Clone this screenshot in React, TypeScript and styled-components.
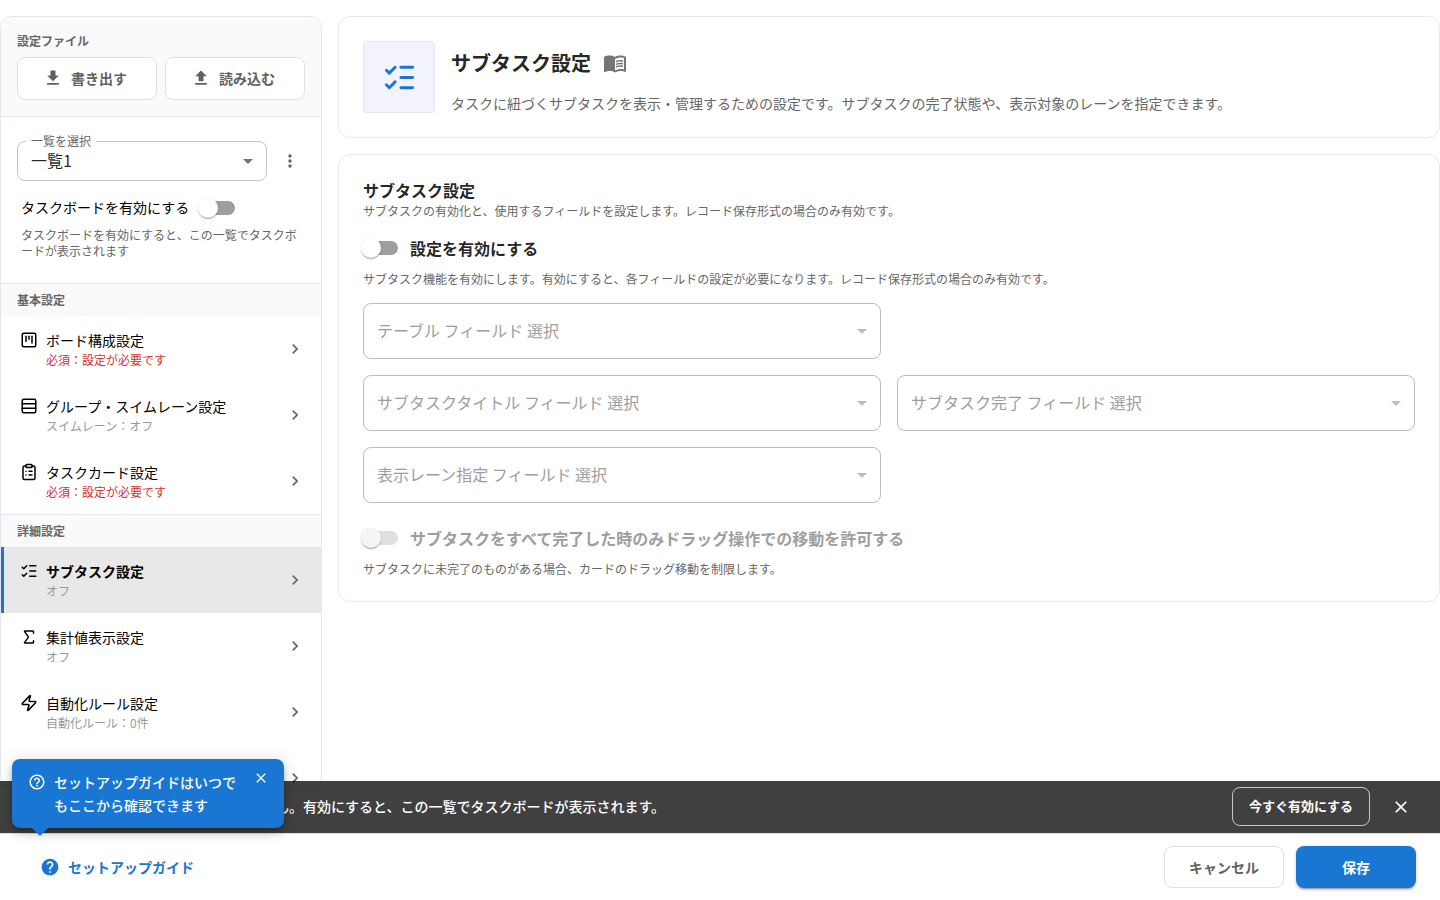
import React from "react";
import styled, { createGlobalStyle, css } from "styled-components";
import {
  MdArrowDropDown,
  MdChevronRight,
  MdClose,
  MdDownload,
  MdUpload,
  MdHelp,
  MdHelpOutline,
  MdInfoOutline,
  MdMenuBook,
  MdMoreVert,
} from "react-icons/md";
import { ClipboardList, Filter, ListChecks, Rows3, Sigma, SquareKanban, Zap } from "lucide-react";

const color = {
  primary: "#1976d2",
  text: "rgba(0, 0, 0, 0.87)",
  muted: "#666666",
  faint: "#999999",
  error: "#d32f2f",
  line: "#e3e6f0",
  surface: "#fafafa",
};

const GlobalStyle = createGlobalStyle`
  *, *::before, *::after { box-sizing: border-box; }
  body {
    margin: 0;
    background: #fff;
    color: ${color.text};
    font-family: "Noto Sans CJK JP", sans-serif;
    font-size: 14px;
    line-height: 20px;
  }
  button, select, input { font: inherit; color: inherit; margin: 0; }
  h1, h2, h3, p, ul { margin: 0; padding: 0; }
  button { cursor: pointer; }
`;

const Page = styled.div`
  height: 100vh;
  display: flex;
  flex-direction: column;
`;

const Content = styled.div`
  flex: 1;
  min-height: 0;
  display: grid;
  grid-template-columns: 322px minmax(0, 1fr);
  gap: 16px;
  padding: 16px 0 45px;
`;

const Sidebar = styled.aside`
  border: 1px solid ${color.line};
  border-radius: 12px;
  overflow: hidden;
  min-height: 0;
`;

const FileSection = styled.section`
  background: ${color.surface};
  padding: 16px;
  border-bottom: 1px solid ${color.line};
`;

const FileTitle = styled.h2`
  font-size: 12px;
  line-height: 16px;
  font-weight: 700;
  color: ${color.muted};
  margin-bottom: 8px;
`;

const ButtonPair = styled.div`
  display: grid;
  grid-template-columns: 1fr 1fr;
  gap: 8px;
`;

const OutlinedButton = styled.button`
  display: flex;
  align-items: center;
  justify-content: center;
  gap: 8px;
  height: 43px;
  padding: 0 16px 2px;
  border: 1px solid #e0e0e0;
  border-radius: 8px;
  background: #fff;
  color: #616161;
  font-weight: 700;
  > svg { margin-left: -4px; }
`;

const ViewSection = styled.section`
  padding: 24px 16px;
`;

const ViewRow = styled.div`
  display: grid;
  grid-template-columns: 1fr 30px;
  gap: 8px;
  align-items: center;
`;

const SelectBox = styled.div<{ $compact?: boolean }>`
  position: relative;
  select {
    appearance: none;
    display: block;
    width: 100%;
    height: ${(p) => (p.$compact ? "40px" : "56px")};
    padding: 0 32px 2px 13px;
    border: 1px solid ${(p) => (p.$compact ? "#c4c4c4" : "#bdbdbd")};
    border-radius: 8px;
    background: transparent;
    font-size: 16px;
    opacity: 1;
  }
`;

const FloatingLabel = styled.label`
  position: absolute;
  top: -8px;
  left: 9px;
  padding: 0 5px;
  background: #fff;
  color: ${color.muted};
  font-size: 12px;
  line-height: 16px;
`;

const InnerLabel = styled.label`
  position: absolute;
  top: 15px;
  left: 14px;
  color: #9e9e9e;
  font-size: 16px;
  line-height: 24px;
  pointer-events: none;
`;

const Caret = styled(MdArrowDropDown)<{ $disabled?: boolean }>`
  position: absolute;
  right: 7px;
  top: calc(50% - 12px);
  pointer-events: none;
  color: ${(p) => (p.$disabled ? "#bdbdbd" : "#757575")};
`;

const IconButton = styled.button`
  display: flex;
  align-items: center;
  justify-content: center;
  padding: 5px;
  border: 0;
  background: transparent;
  color: ${color.muted};
`;

const Switch = styled.input.attrs({ type: "checkbox", role: "switch" })`
  appearance: none;
  position: relative;
  flex: none;
  width: 34px;
  height: 14px;
  border-radius: 7px;
  background: #9e9e9e;
  cursor: pointer;
  &::before {
    content: "";
    position: absolute;
    left: -3px;
    top: -3px;
    width: 20px;
    height: 20px;
    border-radius: 50%;
    background: #fff;
    box-shadow: 0 2px 1px -1px rgba(0, 0, 0, 0.2), 0 1px 1px rgba(0, 0, 0, 0.14), 0 1px 3px rgba(0, 0, 0, 0.12);
  }
  &:checked { background: ${color.primary}; }
  &:checked::before { left: 17px; }
  &:disabled { background: #e0e0e0; cursor: default; }
  &:disabled::before { background: #f5f5f5; }
`;

const ViewToggle = styled.label`
  display: flex;
  align-items: center;
  gap: 12px;
  margin: 17px 4px 9px;
  color: #000;
  > span { padding-bottom: 2px; line-height: 18px; }
`;

const ViewHint = styled.p`
  margin: 0 4px;
  font-size: 12px;
  line-height: 16px;
  color: ${color.muted};
`;

const GroupTitle = styled.h3`
  padding: 8px 16px;
  border-top: 1px solid ${color.line};
  background: ${color.surface};
  color: ${color.muted};
  font-size: 12px;
  line-height: 16px;
  font-weight: 700;
`;

const NavList = styled.ul`
  list-style: none;
`;

const NavButton = styled.button<{ $active: boolean }>`
  display: grid;
  grid-template-columns: 18px 1fr 20px;
  column-gap: 8px;
  align-items: center;
  width: 100%;
  height: 66px;
  padding: 0 16px;
  border: 0;
  border-left: 3px solid transparent;
  background: transparent;
  color: #000;
  text-align: left;
  ${(p) =>
    p.$active &&
    css`
      border-left-color: ${color.primary};
      background: #e8e8e8;
      font-weight: 700;
    `}
  > svg:first-child {
    align-self: start;
    margin-top: 15px;
  }
  > svg:last-child { color: ${color.muted}; }
`;

const NavText = styled.span`
  display: flex;
  flex-direction: column;
  padding-top: 2px;
`;

const NavStatus = styled.span<{ $error?: boolean }>`
  font-size: 12px;
  font-weight: 400;
  line-height: 20px;
  color: ${(p) => (p.$error ? color.error : color.faint)};
`;

const Main = styled.main`
  display: flex;
  flex-direction: column;
  gap: 16px;
`;

const Card = styled.section`
  border: 1px solid #e8e8f0;
  border-radius: 12px;
  padding: 24px;
`;

const HeaderCard = styled(Card)`
  display: flex;
  gap: 16px;
`;

const HeaderIcon = styled.div`
  display: flex;
  align-items: center;
  justify-content: center;
  width: 72px;
  height: 72px;
  border: 1px solid ${color.line};
  border-radius: 4px;
  background: #f3f3fd;
  color: ${color.primary};
`;

const TitleRow = styled.div`
  display: flex;
  align-items: center;
  gap: 12px;
  height: 44px;
`;

const Title = styled.h1`
  font-size: 20px;
  line-height: 32px;
  font-weight: 700;
`;

const Lead = styled.p`
  margin-top: 8px;
  color: ${color.muted};
`;

const SectionTitle = styled.h2`
  margin-bottom: 2px;
  font-size: 16px;
  line-height: 22px;
  font-weight: 700;
`;

const Note = styled.p`
  font-size: 12px;
  line-height: 16px;
  color: ${color.muted};
`;

const SettingToggle = styled.label<{ $disabled?: boolean }>`
  display: flex;
  align-items: center;
  gap: 12px;
  margin: 17px 0 11px 1px;
  font-size: 16px;
  line-height: 24px;
  font-weight: 700;
  color: ${(p) => (p.$disabled ? "#9e9e9e" : color.text)};
`;

const Fields = styled.div`
  display: grid;
  grid-template-columns: 1fr 1fr;
  gap: 16px;
  margin: 16px 0 23px;
`;

const WideRow = styled.div`
  grid-column: 1 / -1;
  display: grid;
  grid-template-columns: subgrid;
`;

const Footer = styled.footer`
  position: relative;
  display: flex;
  align-items: center;
  justify-content: space-between;
  height: 67px;
  padding: 0 24px 0 40px;
  background: #fff;
  box-shadow: inset 0 1px #e0e0e0;
`;

const GuideLink = styled.a`
  display: flex;
  align-items: center;
  gap: 8px;
  color: ${color.primary};
  font-weight: 700;
  text-decoration: none;
`;

const Actions = styled.div`
  display: flex;
  gap: 12px;
`;

const CancelButton = styled(OutlinedButton)`
  width: 120px;
  height: 42px;
  padding: 0 16px;
`;

const SaveButton = styled(CancelButton)`
  border: 0;
  background: ${color.primary};
  color: #fff;
  box-shadow: 0 3px 1px -2px rgba(0, 0, 0, 0.2), 0 2px 2px rgba(0, 0, 0, 0.14), 0 1px 5px rgba(0, 0, 0, 0.12);
`;

const Snackbar = styled.div`
  position: absolute;
  left: 0;
  right: 0;
  bottom: 100%;
  display: flex;
  align-items: center;
  gap: 14px;
  height: 52px;
  padding: 0 22px 2px 16px;
  background: rgba(0, 0, 0, 0.75);
  color: #fff;
  font-weight: 500;
`;

const SnackbarText = styled.p`
  flex: 1;
`;

const EnableButton = styled.button`
  width: 138px;
  height: 39px;
  padding: 0;
  border: 1px solid rgba(255, 255, 255, 0.7);
  border-radius: 8px;
  background: transparent;
  color: #fff;
  font-size: 13px;
  font-weight: 700;
`;

const SnackbarClose = styled(IconButton)`
  color: #fff;
  padding: 8px 7px 6px;
`;

const GuideTip = styled.div`
  position: absolute;
  left: 12px;
  bottom: calc(100% + 5px);
  display: flex;
  align-items: flex-start;
  gap: 8px;
  width: 272px;
  padding: 11px 15px 11px 16px;
  border-radius: 8px;
  background: ${color.primary};
  color: #fff;
  font-weight: 500;
  line-height: 23px;
  box-shadow: 0 3px 5px -1px rgba(0, 0, 0, 0.2), 0 6px 10px rgba(0, 0, 0, 0.14), 0 1px 18px rgba(0, 0, 0, 0.12);
  &::after {
    content: "";
    position: absolute;
    left: 20px;
    top: 100%;
    border: 8px solid transparent;
    border-top-color: ${color.primary};
    border-bottom: 0;
  }
  > svg { flex: none; margin-top: 3px; }
`;

const TipText = styled.p`
  && { padding-top: 1px; }
  flex: 1;
`;

const TipClose = styled(IconButton)`
  padding: 0;
  color: #fff;
`;

type NavEntry = { icon: React.ElementType; label: string; status: string; error?: boolean; active?: boolean };

const basic: NavEntry[] = [
  { icon: SquareKanban, label: "ボード構成設定", status: "必須：設定が必要です", error: true },
  { icon: Rows3, label: "グループ・スイムレーン設定", status: "スイムレーン：オフ" },
  { icon: ClipboardList, label: "タスクカード設定", status: "必須：設定が必要です", error: true },
];

const advanced: NavEntry[] = [
  { icon: ListChecks, label: "サブタスク設定", status: "オフ", active: true },
  { icon: Sigma, label: "集計値表示設定", status: "オフ" },
  { icon: Zap, label: "自動化ルール設定", status: "自動化ルール：0件" },
  { icon: Filter, label: "絞り込み設定", status: "オフ" },
];

function NavGroup({ title, items }: { title: string; items: NavEntry[] }) {
  return (
    <nav aria-label={title}>
      <GroupTitle>{title}</GroupTitle>
      <NavList>
        {items.map(({ icon: Icon, label, status, error, active }) => (
          <li key={label}>
            <NavButton type="button" $active={!!active}>
              <Icon size={18} />
              <NavText>
                <span>{label}</span>
                <NavStatus $error={error}>{status}</NavStatus>
              </NavText>
              <MdChevronRight size={20} />
            </NavButton>
          </li>
        ))}
      </NavList>
    </nav>
  );
}

function FieldSelect({ id, label }: { id: string; label: string }) {
  return (
    <SelectBox>
      <select id={id} disabled />
      <InnerLabel htmlFor={id}>{label}</InnerLabel>
      <Caret size={24} $disabled />
    </SelectBox>
  );
}

export default function App() {
  return (
    <Page lang="ja">
      <GlobalStyle />
      <Content>
        <Sidebar>
          <FileSection>
            <FileTitle>設定ファイル</FileTitle>
            <ButtonPair>
              <OutlinedButton type="button">
                <MdDownload size={20} />
                書き出す
              </OutlinedButton>
              <OutlinedButton type="button">
                <MdUpload size={20} />
                読み込む
              </OutlinedButton>
            </ButtonPair>
          </FileSection>
          <ViewSection>
            <ViewRow>
              <SelectBox $compact>
                <FloatingLabel htmlFor="view">一覧を選択</FloatingLabel>
                <select id="view">
                  <option>一覧1</option>
                </select>
                <Caret size={24} />
              </SelectBox>
              <IconButton type="button" aria-label="メニュー">
                <MdMoreVert size={20} />
              </IconButton>
            </ViewRow>
            <ViewToggle>
              <span>タスクボードを有効にする</span>
              <Switch />
            </ViewToggle>
            <ViewHint>タスクボードを有効にすると、この一覧でタスクボードが表示されます</ViewHint>
          </ViewSection>
          <NavGroup title="基本設定" items={basic} />
          <NavGroup title="詳細設定" items={advanced} />
        </Sidebar>
        <Main>
          <HeaderCard>
            <HeaderIcon>
              <ListChecks size={35} />
            </HeaderIcon>
            <div>
              <TitleRow>
                <Title>サブタスク設定</Title>
                <MdMenuBook size={24} color="#757575" />
              </TitleRow>
              <Lead>
                タスクに紐づくサブタスクを表示・管理するための設定です。サブタスクの完了状態や、表示対象のレーンを指定できます。
              </Lead>
            </div>
          </HeaderCard>
          <Card>
            <SectionTitle>サブタスク設定</SectionTitle>
            <Note>サブタスクの有効化と、使用するフィールドを設定します。レコード保存形式の場合のみ有効です。</Note>
            <SettingToggle>
              <Switch />
              設定を有効にする
            </SettingToggle>
            <Note>
              サブタスク機能を有効にします。有効にすると、各フィールドの設定が必要になります。レコード保存形式の場合のみ有効です。
            </Note>
            <Fields>
              <WideRow>
                <FieldSelect id="table" label="テーブル フィールド 選択" />
              </WideRow>
              <FieldSelect id="title" label="サブタスクタイトル フィールド 選択" />
              <FieldSelect id="done" label="サブタスク完了 フィールド 選択" />
              <FieldSelect id="lane" label="表示レーン指定 フィールド 選択" />
            </Fields>
            <SettingToggle $disabled>
              <Switch disabled />
              サブタスクをすべて完了した時のみドラッグ操作での移動を許可する
            </SettingToggle>
            <Note>サブタスクに未完了のものがある場合、カードのドラッグ移動を制限します。</Note>
          </Card>
        </Main>
      </Content>
      <Footer>
        <Snackbar role="status">
          <MdInfoOutline size={22} />
          <SnackbarText>タスクボードが有効になっていません。有効にすると、この一覧でタスクボードが表示されます。</SnackbarText>
          <EnableButton type="button">今すぐ有効にする</EnableButton>
          <SnackbarClose type="button" aria-label="閉じる">
            <MdClose size={20} />
          </SnackbarClose>
        </Snackbar>
        <GuideTip>
          <MdHelpOutline size={18} />
          <TipText>セットアップガイドはいつでもここから確認できます</TipText>
          <TipClose type="button" aria-label="ガイドを閉じる">
            <MdClose size={16} />
          </TipClose>
        </GuideTip>
        <GuideLink href="#guide">
          <MdHelp size={20} />
          セットアップガイド
        </GuideLink>
        <Actions>
          <CancelButton type="button">キャンセル</CancelButton>
          <SaveButton type="button">保存</SaveButton>
        </Actions>
      </Footer>
    </Page>
  );
}
